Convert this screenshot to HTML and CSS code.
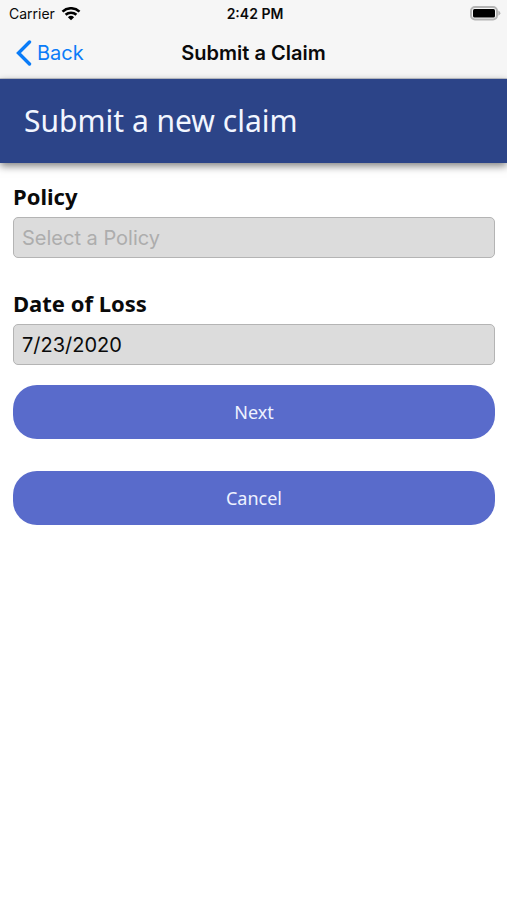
FILE: index.html
```html
<!DOCTYPE html>
<html lang="en">
<head>
    <meta charset="UTF-8">
    <meta name="viewport" content="width=device-width, initial-scale=1.0">
    <title>Submit a Claim</title>
    <link rel="stylesheet" href="styles.css">
</head>
<body>
    <header class="top">
        <div class="status-bar">
            <div class="carrier">
                <span>Carrier</span>
                <svg class="wifi" width="20" height="14" viewBox="0 0 20 14" aria-hidden="true">
                    <path d="M1.5 4.6 A12.5 12.5 0 0 1 18.5 4.6" />
                    <path d="M4.6 7.8 A8 8 0 0 1 15.4 7.8" />
                    <path class="dot" d="M10 13.3 L6.9 10.2 A4.5 4.5 0 0 1 13.1 10.2 Z" />
                </svg>
            </div>
            <div class="time">2:42 PM</div>
            <svg class="battery" width="31" height="15" viewBox="0 0 31 15" aria-hidden="true">
                <rect class="case" x="1" y="1" width="26" height="12.5" rx="4" />
                <rect x="3" y="3" width="22" height="8.5" rx="1.5" />
                <path class="cap" d="M28.3 4.6 Q32.5 7.2 28.3 9.8 Z" />
            </svg>
        </div>
        <nav class="nav-bar">
            <a class="back" href="#">
                <svg width="16" height="26" viewBox="0 0 16 26" aria-hidden="true">
                    <path d="M13.5 2 L2.5 13 L13.5 24" />
                </svg>
                <span>Back</span>
            </a>
            <div class="nav-title">Submit a Claim</div>
        </nav>
    </header>
    <h1 class="banner">Submit a new claim</h1>
    <form class="claim-form">
        <div class="form-group">
            <label for="policy">Policy</label>
            <input type="text" id="policy" name="policy" placeholder="Select a Policy">
        </div>
        <div class="form-group">
            <label for="lossDate">Date of Loss</label>
            <input type="text" id="lossDate" name="lossDate" value="7/23/2020">
        </div>
        <div class="buttons">
            <button type="button">Next</button>
            <button type="button">Cancel</button>
        </div>
    </form>
</body>
</html>
```

FILE: styles.css
```css
body {
    margin: 0;
    background-color: #fff;
    color: #0a0a0a;
    font-family: Inter, "Liberation Sans", sans-serif;
}
.top {
    background-color: #f6f6f6;
    border-bottom: 1px solid #c4c8d0;
}
.status-bar {
    display: grid;
    grid-template-columns: 1fr auto 1fr;
    align-items: center;
    height: 27px;
    padding: 0 6px 0 9px;
    font-size: 14px;
}
.carrier {
    display: flex;
    align-items: center;
    gap: 6px;
}
.wifi {
    fill: none;
    stroke: #000;
    stroke-width: 2.6;
}
.wifi .dot {
    fill: #000;
    stroke: none;
}
.time {
    font-weight: 600;
}
.battery {
    justify-self: end;
}
.battery .case {
    fill: none;
    stroke: #b4b4b4;
    stroke-width: 2;
}
.battery .cap {
    fill: #b4b4b4;
}
.nav-bar {
    display: grid;
    grid-template-columns: 1fr auto 1fr;
    align-items: center;
    height: 51px;
    padding: 0 16px;
    font-size: 20px;
}
.back {
    display: flex;
    align-items: center;
    gap: 5px;
    color: #0a7cf8;
    text-decoration: none;
}
.back svg {
    fill: none;
    stroke: #0a7cf8;
    stroke-width: 3.4;
    stroke-linecap: round;
}
.nav-title {
    font-weight: 600;
}
.banner {
    margin: 0;
    padding: 22px 24px;
    background-color: #2c4488;
    color: #f2f6ff;
    font-family: "Noto Sans", sans-serif;
    font-size: 30px;
    font-weight: 400;
    line-height: 40px;
    box-shadow: 0 3px 8px rgba(0, 0, 0, 0.5);
}
.claim-form {
    padding: 20px 12px 20px 13px;
}
.form-group {
    margin-bottom: 32px;
}
label {
    display: block;
    margin-bottom: 8px;
    font-family: "Noto Sans", sans-serif;
    font-size: 22px;
    font-weight: 700;
    line-height: 26px;
}
input {
    display: block;
    width: 100%;
    height: 41px;
    padding: 0 8px;
    box-sizing: border-box;
    border: 1px solid #b4b4b4;
    border-radius: 5px;
    background-color: #dcdcdc;
    color: #0a0a0a;
    font-family: inherit;
    font-size: 20px;
}
input::placeholder {
    color: #adadad;
    opacity: 1;
}
.form-group + .form-group {
    margin-bottom: 20px;
}
.buttons {
    display: grid;
    gap: 32px;
}
button {
    height: 54px;
    border: none;
    border-radius: 24px;
    background-color: #596bcb;
    color: #eef2ff;
    font-family: "Noto Sans", sans-serif;
    font-size: 18px;
    cursor: pointer;
}
```
